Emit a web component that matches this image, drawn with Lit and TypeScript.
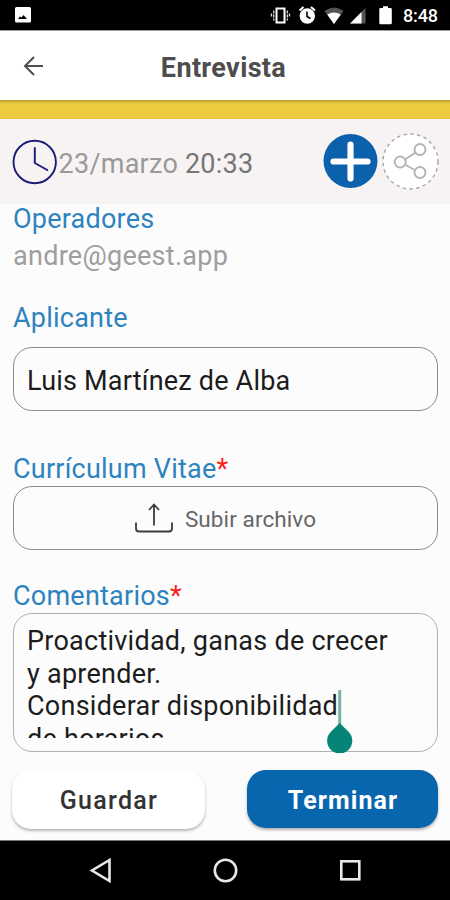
import { LitElement, html, css } from "lit";
import { customElement } from "lit/decorators.js";

@customElement("app-root")
export class AppRoot extends LitElement {
  static styles = css`
    :host { display: block; width: 450px; height: 900px; overflow: hidden; background: #fcfcfc; font-family: Roboto, sans-serif; font-size: 27px; letter-spacing: 0.23px; color: #1c1c1c; }
    * { box-sizing: border-box; }
    svg { display: block; flex: none; }
    .status { height: 30px; background: #000; color: #fff; display: flex; align-items: center; padding: 0 12px 0 14px; }
    .status .right { margin-left: auto; display: flex; align-items: center; }
    .time { font-size: 18px; font-weight: 500; letter-spacing: -0.1px; line-height: 30px; margin-left: 11px; padding-top: 2px; }
    .bar { height: 70px; background: #fff; display: grid; grid-template-columns: 66px 1fr 66px; align-items: center; border-top: 1px solid #9a9a9a; }
    .bar svg { margin-left: 21px; }
    h1 { margin: 0; padding-top: 5px; padding-right: 3px; text-align: center; font-size: 27px; letter-spacing: 0.35px; font-weight: 700; color: #4d4d4d; line-height: 32px; }
    .band { height: 19px; background: linear-gradient(#b39a2e 0, #d9ba36 2px, #eccb3e 4px, #eccb3e 100%); }
    .when { height: 85px; background: #f7f3f3; display: flex; align-items: center; padding: 0 11px 0 12px; }
    .date { color: #999; line-height: 32px; padding-top: 4px; padding-left: 0.6px; white-space: pre; }
    .date b { font-weight: 400; color: #767676; }
    .actions { margin-left: auto; display: flex; gap: 4px; }
    .form { padding: 1px 12px 0; height: 636px; }
    .label { color: #2e83bf; line-height: 28px; height: 28px; padding-left: 1px; white-space: nowrap; }
    .label i { font-style: normal; color: #fb1d1d; }
    .mail { color: #9e9e9e; line-height: 28px; padding-left: 1px; margin-top: 9px; height: 28px; letter-spacing: 0.28px; }
    .gap-a { margin-top: 34px; }
    .box { border: 1px solid #8b8b8b; border-radius: 19px; height: 64px; width: 425px; margin-left: 1px; display: flex; align-items: center; }
    .name { margin-top: 15px; padding: 4px 13px 0; margin-bottom: 44px; letter-spacing: 0.2px; }
    .upload { margin-top: 3px; margin-bottom: 32px; justify-content: center; gap: 12px; font-size: 22.5px; letter-spacing: 0.1px; color: #666; }
    .upload span { padding-top: 1px; }
    .notes { margin-top: 3px; height: 139px; border-color: #b0b0b0; display: block; position: relative; padding-top: 11px; }
    .clip { height: 113px; overflow: hidden; padding-left: 13px; line-height: 32.6px; letter-spacing: 0.25px; white-space: pre; }
    .caret { position: absolute; left: 311px; top: 76px; }
    .buttons { display: flex; justify-content: space-between; margin-top: 18px; }
    .btn { height: 59px; border-radius: 19px; display: flex; align-items: center; justify-content: center; font-size: 25px; padding-top: 2px; }
    .save { width: 193px; background: #fff; color: #333; font-weight: 500; letter-spacing: 1.3px; padding-left: 1px; box-shadow: 0 2px 3px rgba(0,0,0,.28); }
    .done { width: 191px; height: 58px; background: #0866af; color: #fff; font-weight: 700; letter-spacing: 1.1px; padding-left: 1px; box-shadow: 0 2px 3px rgba(0,0,0,.3); }
    .nav { height: 60px; background: #000; border-top: 1px solid #777; display: flex; justify-content: center; }
  `;

  render() {
    return html`
      <div class="status">
        <svg width="18" height="18" viewBox="0 0 18 18"><rect x="1" y="1" width="16" height="15.500" rx="1.500" fill="#fff"/><path d="M4 13l2-2.500 1.500 1 2-2.500 3.500 4z" fill="#000"/></svg>
        <div class="right">
          <svg width="122" height="24" viewBox="270 3 122 24" fill="none">
            <rect x="276.500" y="8.500" width="8" height="14" fill="#000" stroke="#fff" stroke-width="2"/>
            <path d="M273.700 10.500v10M287.300 10.500v10M271.500 13.500v4M289.500 13.500v4" stroke="#ddd" stroke-width="1.300" stroke-dasharray="3 1"/>
            <circle cx="307.300" cy="16" r="7.700" fill="#fff"/><path d="M307 11.500v5l3.500 2" stroke="#000" stroke-width="1.600"/><path d="M299.500 10.500l4-3.500M315 10.500l-4-3.500" stroke="#fff" stroke-width="2"/>
            <path d="M324.500 11q9.500-7 19 0L334 24z" fill="#555"/><path d="M327.200 14.500q6.800-4 13.600 0L334 24z" fill="#fff"/>
            <path d="M350 23.500L365.500 8v15.500z" fill="#555"/><path d="M350 23.500L361.500 12v11.500z" fill="#fff"/>
            <path d="M380.500 8h2.500V6.300h5V8h2.500q1.300 0 1.300 1.300V23q0 1.300-1.300 1.300h-10q-1.200 0-1.200-1.300V9.300q0-1.300 1.200-1.300z" fill="#fff"/>
          </svg>
          <div class="time">8:48</div>
        </div>
      </div>
      <div class="bar">
        <svg width="24" height="24" viewBox="0 0 24 24" fill="none" stroke="#4f4f4f" stroke-width="2"><path d="M22 12H4M13 3l-9 9 9 9"/></svg>
        <h1>Entrevista</h1>
      </div>
      <div class="band"></div>
      <div class="when">
        <svg width="46" height="46" viewBox="0 0 46 46" fill="none" stroke="#1c1c78" stroke-linecap="round"><circle cx="22.700" cy="23" r="21.200" stroke-width="1.900"/><path d="M22.800 9v15l12.500 7" stroke-width="1.900" stroke-linejoin="round"/></svg>
        <div class="date">23/marzo <b>20:33</b></div>
        <div class="actions">
          <svg width="55" height="56" viewBox="0 0 55 56"><circle cx="27.500" cy="28" r="27" fill="#0c61ac"/><path d="M27.500 11.500v34M10.500 28.500h34" stroke="#fff" stroke-width="6.200" stroke-linecap="round"/></svg>
          <svg width="57" height="57" viewBox="0 0 57 57" fill="none"><circle cx="28.500" cy="28.500" r="27.500" fill="#fff" stroke="#a5a5a5" stroke-width="1.400" stroke-dasharray="3.400 3.400"/><g stroke="#b4b4b4" stroke-width="1.900"><path d="M23 26.500l10.500-7M23 31.500l10.500 6"/><circle cx="18.200" cy="29" r="5.500"/><circle cx="38" cy="16.500" r="5.500"/><circle cx="38" cy="39.500" r="5.500"/></g></svg>
        </div>
      </div>
      <div class="form">
        <div class="label">Operadores</div>
        <div class="mail">andre@geest.app</div>
        <div class="label gap-a">Aplicante</div>
        <div class="box name">Luis Martínez de Alba</div>
        <div class="label">Currículum Vitae<i>*</i></div>
        <div class="box upload">
          <svg width="38" height="32" viewBox="0 0 38 32" fill="none" stroke="#3c3c3c" stroke-width="1.800"><path d="M19 23.500V2.500M14 8l5-5.500L24 8"/><path d="M1 20.500v6q0 3 3 3h30q3 0 3-3v-6"/></svg>
          <span>Subir archivo</span>
        </div>
        <div class="label">Comentarios<i>*</i></div>
        <div class="box notes">
          <div class="clip">Proactividad, ganas de crecer
y aprender.
Considerar disponibilidad
de horarios</div>
          <svg class="caret" width="28" height="63" viewBox="0 0 28 63"><path d="M14.700 0v38" stroke="#79b3a5" stroke-width="3"/><path d="M14.700 33l8.800 8.800a12.600 12.600 0 1 1-17.600 0z" fill="#048576"/></svg>
        </div>
        <div class="buttons"><div class="btn save">Guardar</div><div class="btn done">Terminar</div></div>
      </div>
      <div class="nav">
        <svg width="450" height="58" viewBox="0 841 450 58" fill="none" stroke="#e8e8e8" stroke-width="2.600"><path d="M109.500 860v21L92 870.500z"/><circle cx="225.500" cy="870.500" r="10.700"/><rect x="341.300" y="861.300" width="18" height="18"/></svg>
      </div>
    `;
  }
}
